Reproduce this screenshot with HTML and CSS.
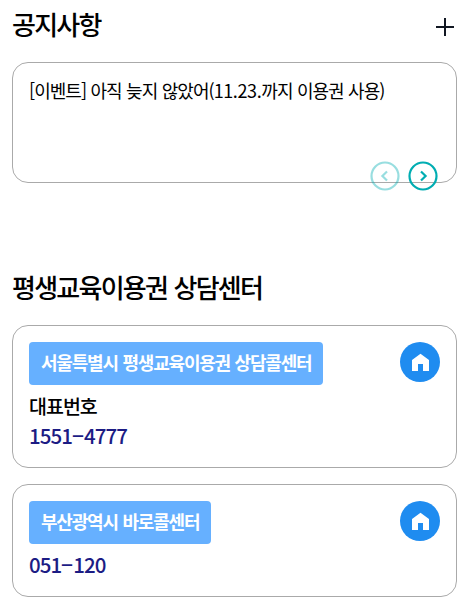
FILE: index.html
```html
<!DOCTYPE html>
<html lang="ko">
<head>
  <meta charset="UTF-8" />
  <meta name="viewport" content="width=device-width, initial-scale=1.0"/>
  <title>평생교육이용권</title>
  <link rel="stylesheet" href="styles.css">
</head>
<body>
  <section class="notice">
    <div class="title-row">
      <h2>공지사항</h2>
      <a href="#" class="more" aria-label="더보기">
        <svg width="18" height="18" viewBox="0 0 18 18"><path d="M9 0v18M0 9h18" stroke="#111722" stroke-width="2"/></svg>
      </a>
    </div>
    <div class="box notice-box">
      <a href="#" class="notice-link">[이벤트] 아직 늦지 않았어(<span class="date">11.23.</span>까지 이용권 사용)</a>
      <div class="arrows">
        <button class="arrow off" aria-label="이전">
          <svg width="30" height="30" viewBox="0 0 30 30"><circle cx="15" cy="15" r="13.5"/><path d="M17 10.5L12.4 15l4.6 4.5"/></svg>
        </button>
        <button class="arrow" aria-label="다음">
          <svg width="30" height="30" viewBox="0 0 30 30"><circle cx="15" cy="15" r="13.5"/><path d="M13 10.5l4.6 4.5-4.6 4.5"/></svg>
        </button>
      </div>
    </div>
  </section>

  <section class="center">
    <h2>평생교육이용권 상담센터</h2>
    <div class="box center-box">
      <div class="info">
        <span class="badge">서울특별시 평생교육이용권 상담콜센터</span>
        <p class="label">대표번호</p>
        <p class="tel">1551<span class="dash">-</span>4777</p>
      </div>
      <a href="#" class="home" aria-label="홈페이지">
        <svg width="40" height="40" viewBox="0 0 40 40"><path d="M20.5 11.7L12 18v11h6v-7h5v7h6V18z"/></svg>
      </a>
    </div>
    <div class="box center-box">
      <div class="info">
        <span class="badge">부산광역시 바로콜센터</span>
        <p class="tel">051<span class="dash">-</span>120</p>
      </div>
      <a href="#" class="home" aria-label="홈페이지">
        <svg width="40" height="40" viewBox="0 0 40 40"><path d="M20.5 11.7L12 18v11h6v-7h5v7h6V18z"/></svg>
      </a>
    </div>
  </section>
</body>
</html>
```
FILE: styles.css
```css
* {
  box-sizing: border-box;
  margin: 0;
  padding: 0;
}

body {
  padding: 6px 8px 0 12px;
  font-family: "Noto Sans CJK KR", sans-serif;
  color: #000;
  background: #fff;
  overflow: hidden;
}

a {
  color: inherit;
  text-decoration: none;
}

h2 {
  font-size: 26px;
  line-height: 36px;
  font-weight: 500;
  letter-spacing: -1.75px;
  word-spacing: 0.8px;
  white-space: nowrap;
}

.title-row {
  display: flex;
  justify-content: space-between;
  height: 56px;
}

.more {
  padding: 12px 3px 0 0;
}

.more svg {
  display: block;
}

.box {
  border: 1px solid #aaa;
  border-radius: 16px;
}

.notice-box {
  display: flex;
  flex-direction: column;
  height: 121px;
  padding: 15px 18px 0 16px;
}

.notice-link {
  font-size: 18px;
  line-height: 24px;
  letter-spacing: -0.95px;
  word-spacing: 0.3px;
  white-space: nowrap;
}

.date {
  letter-spacing: -0.4px;
}

.arrows {
  display: flex;
  justify-content: flex-end;
  gap: 8px;
  margin-top: 59px;
}

.arrow {
  height: 30px;
  border: 0;
  background: none;
}

.arrow svg {
  display: block;
  fill: none;
  stroke: #00adb2;
  stroke-width: 2.2;
}

.off {
  opacity: 0.4;
}

.center {
  padding-top: 86px;
}

.center h2 {
  height: 56px;
}

.center-box {
  display: flex;
  justify-content: space-between;
  margin-bottom: 16px;
  padding: 16px;
}

.badge {
  display: block;
  width: fit-content;
  height: 43px;
  padding: 0 12px;
  border-radius: 4px;
  background: #66b0ff;
  color: #fff;
  font-size: 18px;
  line-height: 40px;
  font-weight: 700;
  letter-spacing: -1.2px;
  word-spacing: 0.8px;
  white-space: nowrap;
}

.label {
  margin: 9px 0 4px;
  font-size: 19.5px;
  line-height: 24px;
  font-weight: 500;
  letter-spacing: -1px;
}

.tel {
  margin-bottom: 3px;
  color: #1c1c84;
  font-size: 20.5px;
  line-height: 26px;
  font-weight: 500;
  letter-spacing: -0.95px;
}

.badge + .tel {
  margin-top: 7px;
}

.dash {
  display: inline-block;
  width: 12px;
  letter-spacing: 0;
  text-align: center;
  transform: scaleX(1.9);
}

.home {
  width: 40px;
  height: 40px;
  border-radius: 50%;
  background: #1f8cf0;
}

.home svg {
  display: block;
  fill: #fff;
}
```
